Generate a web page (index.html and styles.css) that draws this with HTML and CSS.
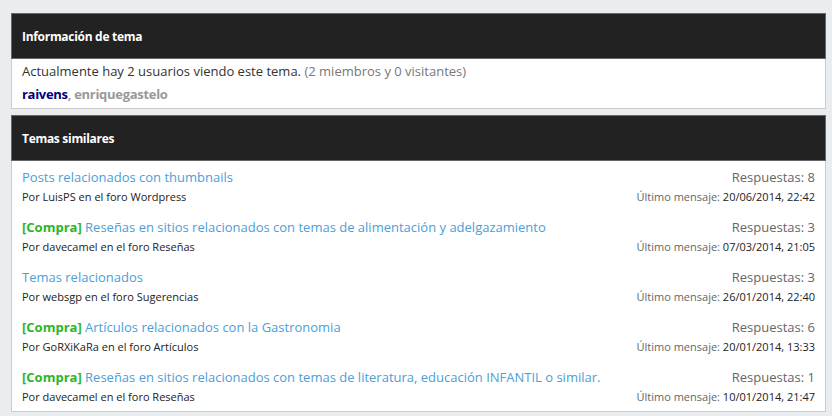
FILE: index.html
```html
<!DOCTYPE html>
<html lang="es">
<head>
    <meta charset="UTF-8">
    <title>Información de tema</title>
    <link rel="stylesheet" href="styles.css">
</head>
<body>
    <div class="block">
        <div class="block-head">Información de tema</div>
        <div class="block-body info">
            <p>Actualmente hay 2 usuarios viendo este tema. <span class="muted">(2 miembros y 0 visitantes)</span></p>
            <p class="users"><a class="user admin" href="#">raivens</a>, <a class="user" href="#">enriquegastelo</a></p>
        </div>
    </div>

    <div class="block">
        <div class="block-head">Temas similares</div>
        <div class="block-body list">
            <div class="row">
                <div class="main">
                    <a class="title" href="#">Posts relacionados con thumbnails</a>
                    <div class="meta">Por LuisPS en el foro Wordpress</div>
                </div>
                <div class="stats">
                    <div class="replies">Respuestas: 8</div>
                    <div class="last"><span>Último mensaje:</span> 20/06/2014, 22:42</div>
                </div>
            </div>
            <div class="row">
                <div class="main">
                    <a class="title" href="#"><b class="prefix">[Compra]</b> Reseñas en sitios relacionados con temas de alimentación y adelgazamiento</a>
                    <div class="meta">Por davecamel en el foro Reseñas</div>
                </div>
                <div class="stats">
                    <div class="replies">Respuestas: 3</div>
                    <div class="last"><span>Último mensaje:</span> 07/03/2014, 21:05</div>
                </div>
            </div>
            <div class="row">
                <div class="main">
                    <a class="title" href="#">Temas relacionados</a>
                    <div class="meta">Por websgp en el foro Sugerencias</div>
                </div>
                <div class="stats">
                    <div class="replies">Respuestas: 3</div>
                    <div class="last"><span>Último mensaje:</span> 26/01/2014, 22:40</div>
                </div>
            </div>
            <div class="row">
                <div class="main">
                    <a class="title" href="#"><b class="prefix">[Compra]</b> Artículos relacionados con la Gastronomia</a>
                    <div class="meta">Por GoRXiKaRa en el foro Artículos</div>
                </div>
                <div class="stats">
                    <div class="replies">Respuestas: 6</div>
                    <div class="last"><span>Último mensaje:</span> 20/01/2014, 13:33</div>
                </div>
            </div>
            <div class="row">
                <div class="main">
                    <a class="title" href="#"><b class="prefix">[Compra]</b> Reseñas en sitios relacionados con temas de literatura, educación INFANTIL o similar.</a>
                    <div class="meta">Por davecamel en el foro Reseñas</div>
                </div>
                <div class="stats">
                    <div class="replies">Respuestas: 1</div>
                    <div class="last"><span>Último mensaje:</span> 10/01/2014, 21:47</div>
                </div>
            </div>
        </div>
    </div>
</body>
</html>
```

FILE: styles.css
```css
body {
    margin: 0;
    padding: 13px 0 0 11px;
    background: #e9edf0;
    font-family: "Open Sans", Arial, sans-serif;
    color: #333;
}
.block {
    width: 815px;
    margin-bottom: 6px;
}
.block-head {
    background: #222;
    border: 1px solid #666;
    height: 44px;
    line-height: 46px;
    padding-left: 10px;
    color: #fff;
    font-size: 12px;
    font-weight: bold;
    letter-spacing: -0.3px;
}
.block-body {
    background: #fff;
    border: 1px solid #ccc;
    border-top: none;
}
.info {
    padding: 1px 10px 2px;
    font-size: 13px;
}
.info p {
    margin: 0;
    line-height: 23px;
}
.muted {
    color: #777;
}
.users {
    font-weight: bold;
    color: #999;
    letter-spacing: -0.3px;
}
.user {
    color: #999;
    text-decoration: none;
}
.user.admin {
    color: #000080;
}
.list {
    display: flex;
    flex-direction: column;
    gap: 10px;
    padding: 6px 10px 4px;
}
.row {
    display: flex;
    justify-content: space-between;
}
.title {
    display: block;
    color: #4aa0d8;
    text-decoration: none;
    font-size: 13px;
    line-height: 20px;
}
.prefix {
    color: #2db51d;
}
.meta {
    font-size: 11px;
    line-height: 20px;
    color: #222;
}
.stats {
    text-align: right;
}
.replies {
    font-size: 13px;
    line-height: 20px;
    color: #666;
}
.last {
    font-size: 11px;
    line-height: 20px;
    color: #222;
}
.last span {
    color: #666;
}
```
